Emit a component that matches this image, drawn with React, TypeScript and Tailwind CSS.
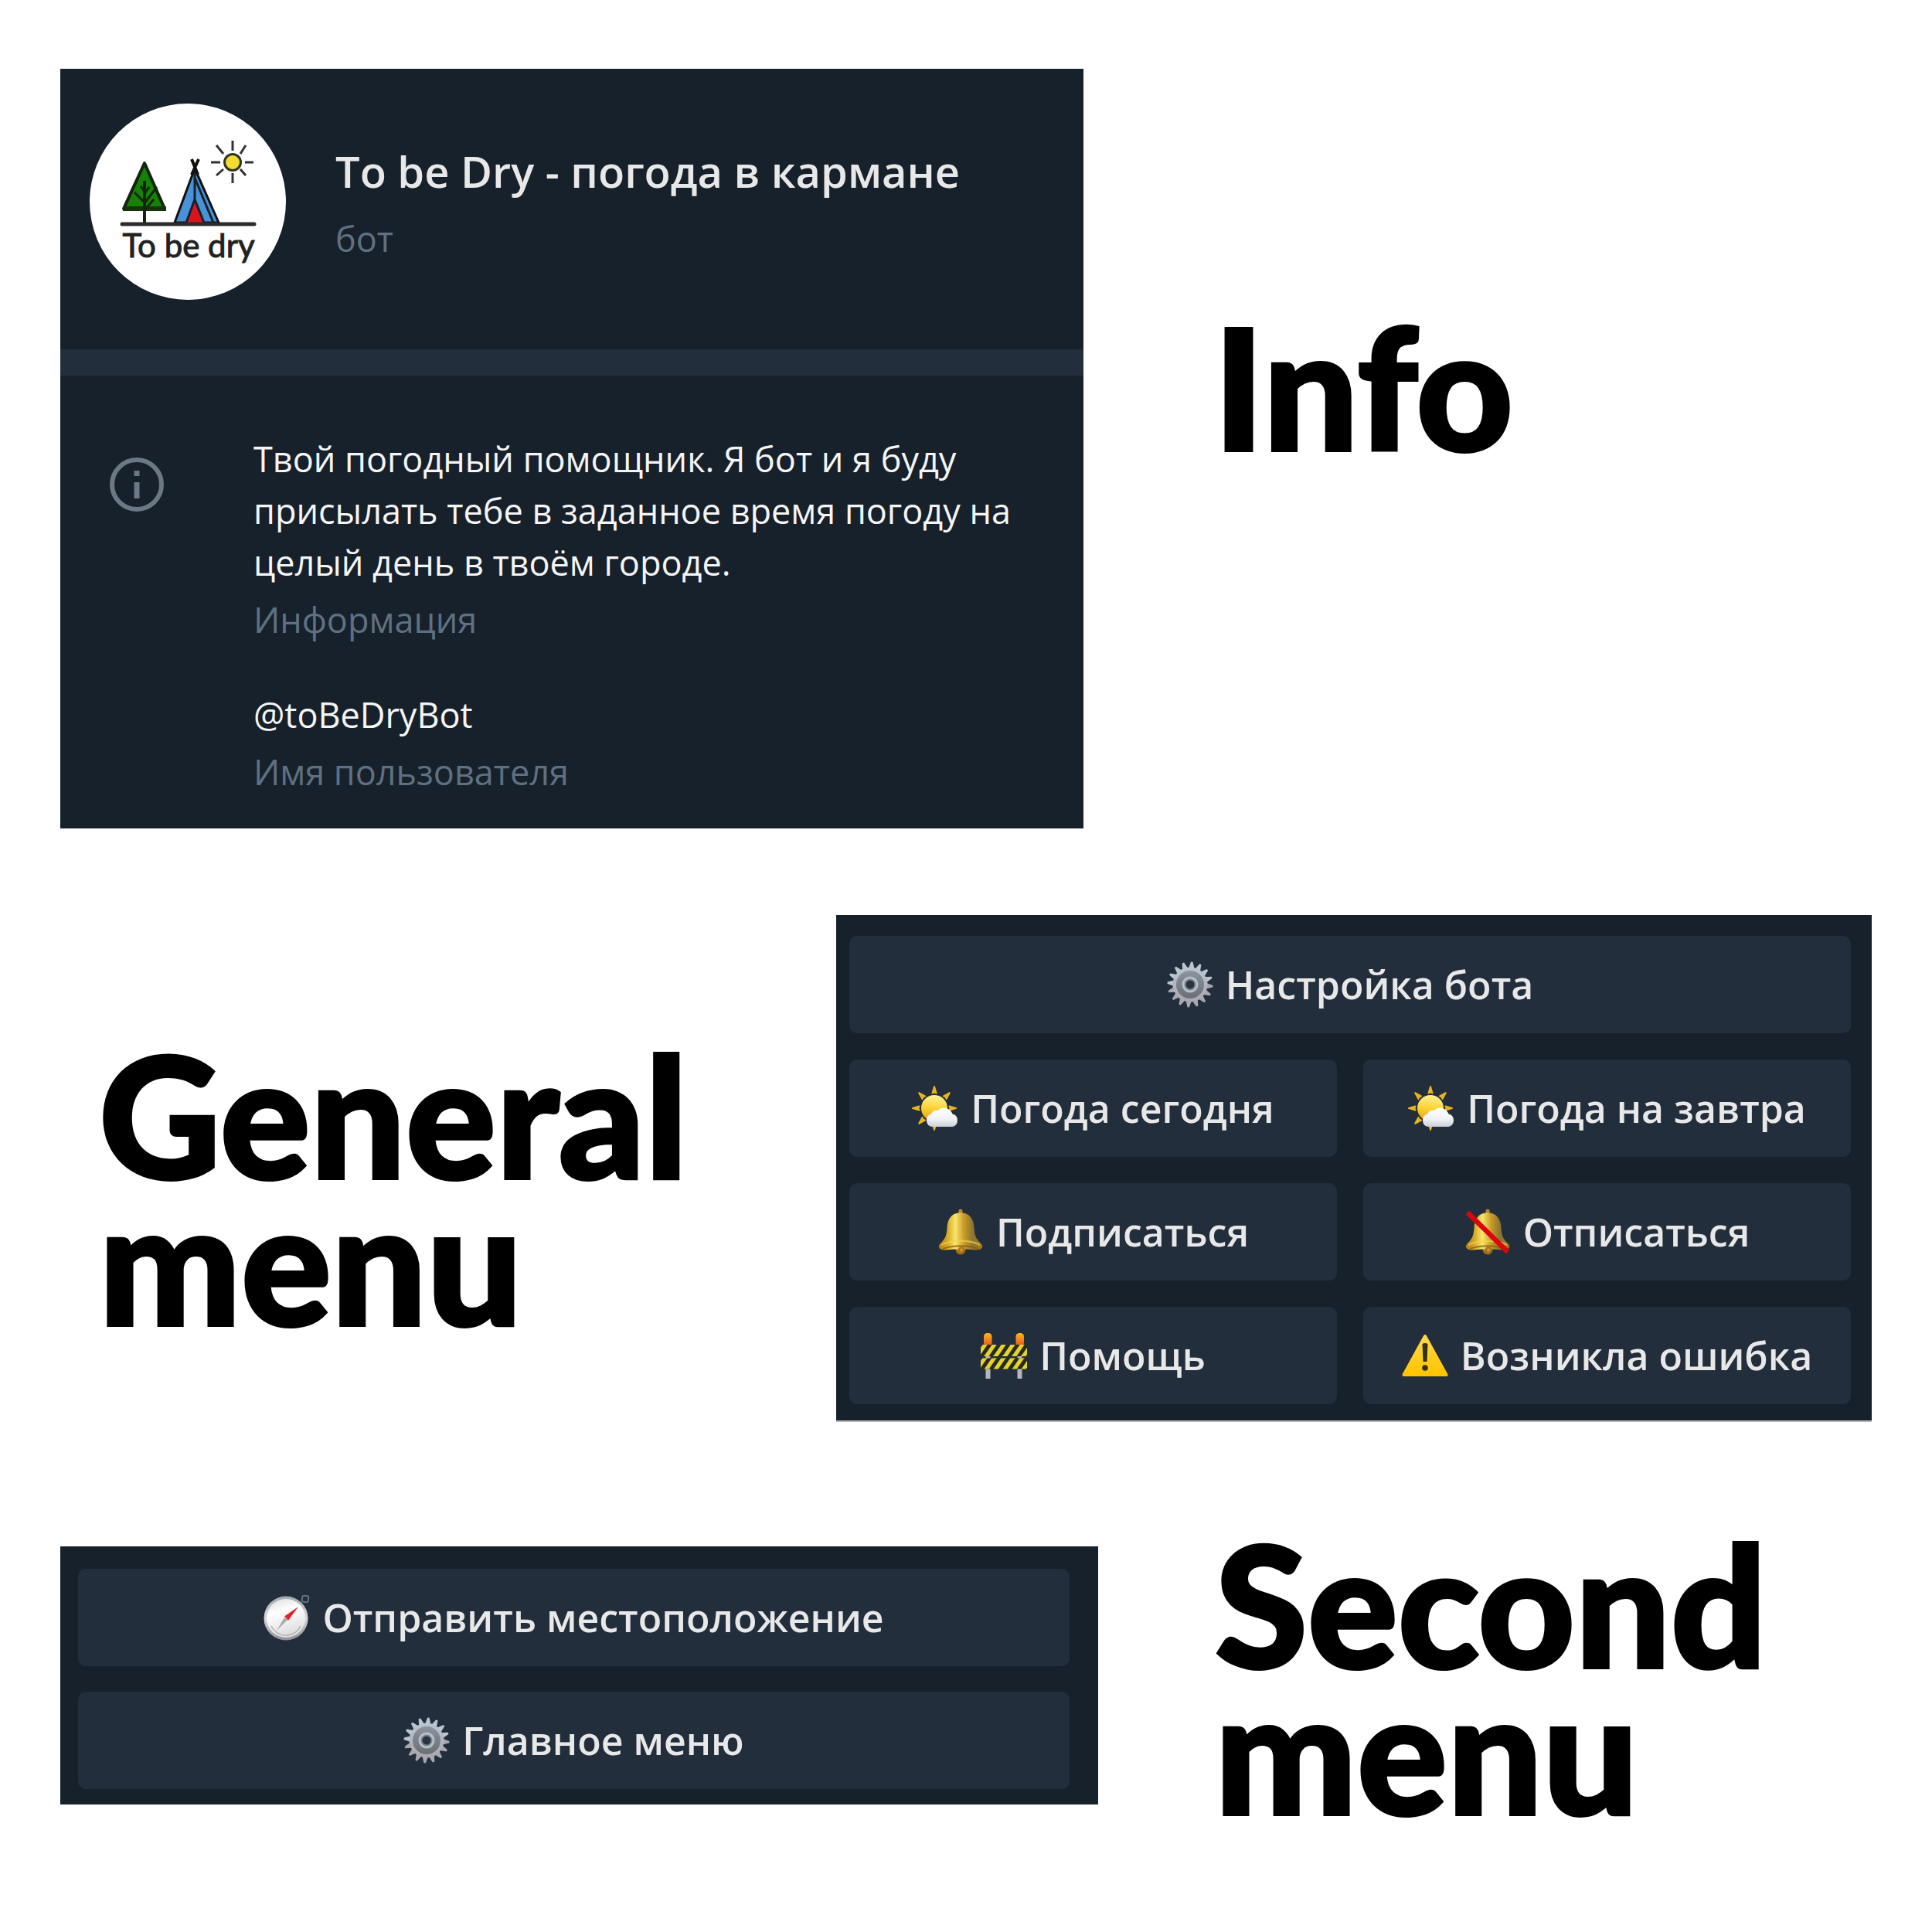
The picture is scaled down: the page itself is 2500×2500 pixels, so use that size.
import type { ReactNode } from "react";

function GearIcon() {
  const teeth = Array.from({ length: 16 }, (_, i) => i * 22.5 + 5);
  return (
    <svg viewBox="0 0 60 60" className="size-[60px] shrink-0" aria-hidden="true">
      <defs>
        <linearGradient id="gear-rim" x1="0" y1="0" x2="0" y2="1">
          <stop offset="0" stopColor="#b9c6d2" />
          <stop offset="1" stopColor="#a9a6ae" />
        </linearGradient>
        <linearGradient id="gear-face" x1="0" y1="0" x2="0" y2="1">
          <stop offset="0" stopColor="#8d949b" />
          <stop offset="1" stopColor="#6c6e75" />
        </linearGradient>
      </defs>
      {teeth.map((a) => (
        <path key={a} d="M26 10 L28.5 0.5 L31 0.5 L34 10 Z" fill={a > 90 && a < 270 ? "#a9a6ae" : "#b9c6d2"} transform={`rotate(${a} 30 30)`} />
      ))}
      <circle cx="30" cy="30" r="22.500" fill="url(#gear-rim)" />
      <circle cx="30" cy="30" r="18" fill="url(#gear-face)" />
      <circle cx="30" cy="30" r="10.500" fill="#b4c0ca" />
      <circle cx="30" cy="30" r="7.500" fill="#7d858e" />
      <circle cx="30" cy="30" r="5.500" fill="#2b3541" />
    </svg>
  );
}

function SunCloudIcon() {
  const rays = [0, 45, 90, 135, 180, 225, 270, 315];
  return (
    <svg viewBox="0 0 60 60" className="size-[60px] shrink-0" aria-hidden="true">
      <defs>
        <linearGradient id="sun-disc" x1="0.3" y1="0" x2="0.2" y2="1">
          <stop offset="0" stopColor="#fdf08a" />
          <stop offset="0.5" stopColor="#f9d334" />
          <stop offset="1" stopColor="#ee9a12" />
        </linearGradient>
        <linearGradient id="cloud" x1="0" y1="0" x2="0" y2="1">
          <stop offset="0" stopColor="#ffffff" />
          <stop offset="0.6" stopColor="#f0f1f4" />
          <stop offset="1" stopColor="#c9d0d8" />
        </linearGradient>
      </defs>
      {rays.map((a) => (
        <path key={a} d="M26.500 10.500 L29 2 L31.500 10.500 Q29 8.500 26.500 10.500 Z" fill="#e9b51d" stroke="#e9b51d" strokeWidth="2" strokeLinejoin="round" transform={`rotate(${a} 29 30)`} />
      ))}
      <circle cx="29" cy="30" r="17" fill="url(#sun-disc)" />
      <path d="M26 54 a8.500 8.500 0 0 1 -1 -16.500 a8 8 0 0 1 8.500 -4.500 a11.500 11.500 0 0 1 19 4.500 a8.500 8.500 0 0 1 0 16.500 Z" fill="url(#cloud)" />
    </svg>
  );
}

function BellIcon({ muted = false }: { muted?: boolean }) {
  return (
    <svg viewBox="0 0 60 60" className="size-[60px] shrink-0" aria-hidden="true">
      <defs>
        <linearGradient id="bell-body" x1="0" y1="0" x2="1" y2="0">
          <stop offset="0" stopColor="#b27c14" />
          <stop offset="0.22" stopColor="#dcae2c" />
          <stop offset="0.38" stopColor="#f9e66c" />
          <stop offset="0.58" stopColor="#c99a26" />
          <stop offset="0.78" stopColor="#8a7434" />
          <stop offset="1" stopColor="#a9781b" />
        </linearGradient>
        <radialGradient id="bell-clapper">
          <stop offset="0" stopColor="#e0a047" />
          <stop offset="1" stopColor="#96640f" />
        </radialGradient>
      </defs>
      <circle cx="30" cy="53" r="6.500" fill="url(#bell-clapper)" />
      <rect x="27.500" y="0.500" width="5" height="9" rx="2.500" fill="#b5872a" />
      <path d="M30 5 C18 6 13 13 12.500 25 C12 36 9 40 3 46 C0 50 3 53 9 53.500 C20 52 40 52 51 53.500 C57 53 60 50 57 46 C51 40 48 36 47.500 25 C47 13 42 6 30 5 Z" fill="url(#bell-body)" />
      <path d="M5 47 C18 40 42 40 55 47" fill="none" stroke="#f3d44e" strokeWidth="2.500" opacity="0.6" />
      <path d="M7 52 C20 47 40 47 53 52" fill="none" stroke="#8e5b0d" strokeWidth="2" opacity="0.8" />
      <circle cx="31" cy="53.500" r="4" fill="url(#bell-clapper)" />
      {muted && <path d="M4 5 L56 56" stroke="#db0510" strokeWidth="6.500" />}
    </svg>
  );
}

function BarrierIcon() {
  const stripes = [-18, -6, 6, 18, 30, 42, 54];
  return (
    <svg viewBox="0 0 60 60" className="size-[60px] shrink-0" aria-hidden="true">
      <defs>
        <clipPath id="barrier-boards">
          <rect x="0" y="16" width="60" height="15" rx="1.500" />
          <rect x="0" y="33.500" width="60" height="14" rx="1.500" />
        </clipPath>
        <linearGradient id="barrier-lamp" x1="0" y1="0" x2="0" y2="1">
          <stop offset="0" stopColor="#ffb81a" />
          <stop offset="1" stopColor="#e8541c" />
        </linearGradient>
      </defs>
      <path d="M9.500 28 V60 M50.500 28 V60" stroke="#b5b5bd" strokeWidth="6" />
      <rect x="4" y="1" width="10.500" height="17" rx="4.500" fill="url(#barrier-lamp)" />
      <rect x="45.500" y="1" width="10.500" height="17" rx="4.500" fill="url(#barrier-lamp)" />
      <g clipPath="url(#barrier-boards)">
        <rect width="60" height="60" fill="#262a20" />
        {stripes.map((x) => (
          <g key={x} stroke="#e3d32b" strokeWidth="5">
            <path d={`M${x} 33 L${x + 13} 14`} />
            <path d={`M${x} 50 L${x + 13} 31`} />
          </g>
        ))}
      </g>
    </svg>
  );
}

function WarningIcon() {
  return (
    <svg viewBox="0 0 60 60" className="size-[60px] shrink-0" aria-hidden="true">
      <defs>
        <linearGradient id="warning" x1="0" y1="0" x2="0" y2="1">
          <stop offset="0" stopColor="#ffd84a" />
          <stop offset="1" stopColor="#ffc400" />
        </linearGradient>
      </defs>
      <path d="M30 5 L57.500 55 H2.500 Z" fill="url(#warning)" stroke="url(#warning)" strokeWidth="4" strokeLinejoin="round" />
      <path d="M26.500 15 Q30 13 33.500 15 L32.500 38 H27.500 Z" fill="#33301c" />
      <circle cx="30" cy="46" r="3.800" fill="#33301c" />
    </svg>
  );
}

function CompassIcon() {
  return (
    <svg viewBox="0 0 60 60" className="size-[60px] shrink-0" aria-hidden="true">
      <defs>
        <linearGradient id="compass-rim" x1="0" y1="0" x2="0" y2="1">
          <stop offset="0" stopColor="#a3abb3" />
          <stop offset="0.5" stopColor="#d9dadb" />
          <stop offset="1" stopColor="#8b8d90" />
        </linearGradient>
        <linearGradient id="compass-face" x1="0" y1="0" x2="0.300" y2="1">
          <stop offset="0" stopColor="#d9dadb" />
          <stop offset="0.400" stopColor="#ffffff" />
          <stop offset="1" stopColor="#dedede" />
        </linearGradient>
      </defs>
      <rect x="50" y="2" width="8" height="8" rx="2" fill="none" stroke="#66717c" strokeWidth="2" transform="rotate(8 54 6)" />
      <circle cx="29" cy="31" r="28.500" fill="url(#compass-rim)" />
      <circle cx="29" cy="31" r="25" fill="url(#compass-face)" />
      <path d="M10 41 A21 21 0 0 0 48 41" fill="none" stroke="#b4b4b4" strokeWidth="1.500" />
      <path d="M27 30 L17 47 L31 33 Z" fill="#a9a9a9" />
      <path d="M45 16 L27 28.500 L32 34 Z" fill="#e3242b" />
    </svg>
  );
}

function Avatar() {
  return (
    <svg viewBox="0 0 254 254" className="size-[254px] shrink-0" role="img" aria-label="To be dry">
      <circle cx="127" cy="127" r="127" fill="#ffffff" />
      <path d="M71 77 L97 136 H44 Z" fill="#178006" stroke="#14240f" strokeWidth="4" strokeLinejoin="round" />
      <path d="M43 136 H99" stroke="#16330c" strokeWidth="6" />
      <path d="M71 100 V155" stroke="#14240f" strokeWidth="4" />
      <path d="M71 128 L58 115 M71 129 L87 108 M71 138 L83 124 M71 114 L66 107 M71 116 L77 108" stroke="#14240f" strokeWidth="3" fill="none" />
      <path d="M136 84 L167 154 H110 Z" fill="#4a92d8" stroke="#111111" strokeWidth="3" strokeLinejoin="round" />
      <path d="M136 125 L148 154 H126 Z" fill="#d8151c" />
      <path d="M136 80 V124 L125 154 M136 96 L160 154 M136 124 L148 154" fill="none" stroke="#17212b" strokeWidth="3" />
      <path d="M132 72 L140 92 M141 72 L132 92" stroke="#111111" strokeWidth="4" />
      <path d="M42 156 H213" stroke="#2b2b2b" strokeWidth="5" strokeLinecap="round" />
      <circle cx="185" cy="76" r="10.500" fill="#f3dc32" stroke="#333322" strokeWidth="3" />
      <path
        d="M185 48 V61 M185 90 V103 M157 76 H169 M201 76 H212 M164 54 L173 65 M202 54 L195 65 M164 93 L173 85 M202 93 L195 85"
        stroke="#333333"
        strokeWidth="3"
        fill="none"
      />
      <text x="128" y="199" textAnchor="middle" fontFamily="Lato, sans-serif" fontSize="42" fill="#222222" stroke="#222222" strokeWidth="1">
        To be dry
      </text>
    </svg>
  );
}

function InfoIcon() {
  return (
    <svg viewBox="0 0 70 70" className="size-[70px] shrink-0" fill="none" stroke="#6c7883" strokeWidth="6" aria-hidden="true">
      <circle cx="35" cy="35" r="32" />
      <path d="M35 32 V53 M35 17 V24" strokeWidth="7" />
    </svg>
  );
}

function MenuButton({ icon, children, wide = false }: { icon: ReactNode; children: string; wide?: boolean }) {
  return (
    <button
      type="button"
      className={`flex h-[126px] items-center justify-center gap-4 rounded-[10px] bg-[#232e3c] text-[50px] leading-[70px] font-semibold whitespace-nowrap text-[#e9e8e8] ${wide ? "col-span-2" : ""}`}
    >
      {icon}
      <span>{children}</span>
    </button>
  );
}

function Heading({ children }: { children: ReactNode }) {
  return (
    <h2 className="font-['Lato',sans-serif] text-[218px] leading-[190px] font-black text-black [-webkit-text-stroke:4px_black]">
      {children}
    </h2>
  );
}

export default function App() {
  return (
    <main className="bg-white pt-[89px] pr-[78px] pb-[140px] pl-[78px] font-['Open_Sans','Noto_Sans',sans-serif]">
      <section className="grid grid-cols-[1324fr_1020fr]">
        <div className="bg-[#17212b] pb-[40px]">
          <header className="flex gap-[64px] pt-[45px] pb-[64px] pl-[38px]">
            <Avatar />
            <div className="pt-[47px]">
              <h1 className="text-[56px] leading-[80px] font-semibold text-[#e9e8e8]">To be Dry - погода в кармане</h1>
              <p className="pt-1 text-[45px] leading-[87px] text-[#5f7082]">бот</p>
            </div>
          </header>
          <div className="h-[34px] bg-[#232e3c]" />
          <div className="flex gap-[116px] pt-[74px] pl-[64px] text-[45px] leading-[67px]">
            <div className="pt-[32px]">
              <InfoIcon />
            </div>
            <dl className="flex flex-col text-[#f5f5f5]">
              <dd>
                Твой погодный помощник. Я бот и я буду
                <br />
                присылать тебе в заданное время погоду на
                <br />
                целый день в твоём городе.
              </dd>
              <dt className="pt-[7px] text-[#5f7082]">Информация</dt>
              <dd className="pt-[56px]">@toBeDryBot</dd>
              <dt className="pt-[7px] text-[#5f7082]">Имя пользователя</dt>
            </dl>
          </div>
        </div>
        <div className="pt-[315px] pl-[168px]">
          <Heading>Info</Heading>
        </div>
      </section>

      <section className="mt-[112px] grid grid-cols-[1004fr_1340fr]">
        <div className="pt-[162px] pl-[50px]">
          <Heading>
            General
            <br />
            menu
          </Heading>
        </div>
        <div className="grid grid-cols-2 gap-[34px] border-b-2 border-[#b4b8bc] bg-[#17212b] pt-[27px] pr-[27px] pb-[21px] pl-[17px]">
          <MenuButton icon={<GearIcon />} wide>Настройка бота</MenuButton>
          <MenuButton icon={<SunCloudIcon />}>Погода сегодня</MenuButton>
          <MenuButton icon={<SunCloudIcon />}>Погода на завтра</MenuButton>
          <MenuButton icon={<BellIcon />}>Подписаться</MenuButton>
          <MenuButton icon={<BellIcon muted />}>Отписаться</MenuButton>
          <MenuButton icon={<BarrierIcon />}>Помощь</MenuButton>
          <MenuButton icon={<WarningIcon />}>Возникла ошибка</MenuButton>
        </div>
      </section>

      <section className="mt-[124px] grid grid-cols-[1343fr_1001fr]">
        <div className="mt-[37px] self-start bg-[#17212b] pt-[29px] pr-[37px] pb-[20px] pl-[23px]">
          <div className="grid grid-cols-1 gap-[33px]">
            <MenuButton icon={<CompassIcon />}>Отправить местоположение</MenuButton>
            <MenuButton icon={<GearIcon />}>Главное меню</MenuButton>
          </div>
        </div>
        <div className="pt-[15px] pl-[151px]">
          <Heading>
            Second
            <br />
            menu
          </Heading>
        </div>
      </section>
    </main>
  );
}
